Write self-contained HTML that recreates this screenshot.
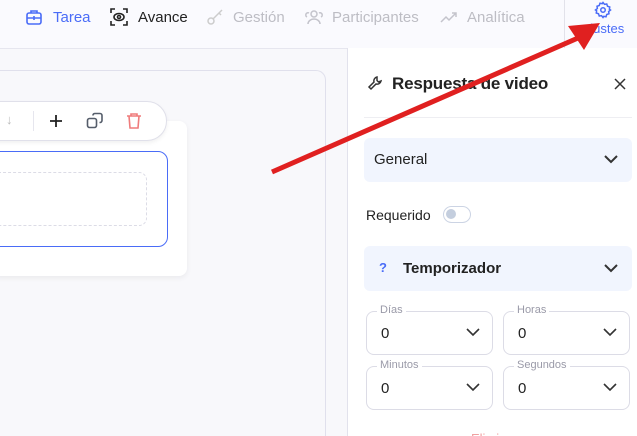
<!DOCTYPE html><html><head><style>
html,body{margin:0;width:637px;height:436px;overflow:hidden}
body{font-family:"Liberation Sans",sans-serif;background:#f8f8fb;position:relative}
.top{position:absolute;left:0;top:0;width:637px;height:48px;background:#fafafe;border-bottom:1px solid #e6e6ef}
.a{position:absolute}
.sel{position:absolute;height:42px;border:1px solid #dcdce6;border-radius:8px;background:#fff}
.sel .l{position:absolute;top:-8px;left:10px;background:#fff;padding:0 3px;font-size:11px;color:#9a9aa8}
.sel .v{position:absolute;left:14px;top:13px;font-size:15px;color:#222}
.sel svg{position:absolute;right:12px;top:16px}
</style></head><body>
<div class="top"></div>
<div class="a" style="left:564px;top:0;width:1px;height:48px;background:#e2e2ea"></div>
<svg class="a" style="left:25px;top:8px" width="18" height="18" viewBox="0 0 18 18" fill="none" stroke="#4a6cf7" stroke-width="1.6"><rect x="2" y="5" width="14" height="11" rx="2"/><path d="M6 5V3h6v2M2 10h14M9 8v4"/></svg>
<div class="a" style="left:53px;top:9px;font-size:15px;color:#4a6cf7">Tarea</div>
<svg class="a" style="left:110px;top:8px" width="18" height="18" viewBox="0 0 18 18" fill="none" stroke="#222" stroke-width="1.6"><path d="M1 5V1h4M13 1h4v4M17 13v4h-4M5 17H1v-4"/><ellipse cx="9" cy="9" rx="5" ry="3.5"/><circle cx="9" cy="9" r="1.5"/></svg>
<div class="a" style="left:138px;top:9px;font-size:15px;color:#222">Avance</div>
<svg class="a" style="left:206px;top:8px" width="18" height="18" viewBox="0 0 18 18" fill="none" stroke="#ccc" stroke-width="1.5"><circle cx="5" cy="13" r="3"/><path d="M7 11l9-9M13 5l2 2"/></svg>
<div class="a" style="left:233px;top:9px;font-size:15px;color:#bdbdc4">Gestión</div>
<svg class="a" style="left:304px;top:8px" width="20" height="18" viewBox="0 0 20 18" fill="none" stroke="#c4c4cc" stroke-width="1.5"><circle cx="10" cy="6" r="3"/><path d="M4 16c0-3 3-5 6-5s6 2 6 5M3 9a2 2 0 1 1 2-4M17 9a2 2 0 1 0-2-4"/></svg>
<div class="a" style="left:332px;top:9px;font-size:15px;color:#bdbdc4">Participantes</div>
<svg class="a" style="left:440px;top:9px" width="18" height="16" viewBox="0 0 18 16" fill="none" stroke="#c4c4cc" stroke-width="1.5"><path d="M1 13l5-5 3 3 7-7M12 4h4v4"/></svg>
<div class="a" style="left:467px;top:9px;font-size:15px;color:#bdbdc4">Analítica</div>
<svg class="a" style="left:594px;top:1px" width="18" height="18" viewBox="0 0 24 24" fill="none" stroke="#4a6cf7" stroke-width="2"><circle cx="12" cy="12" r="3"/><path d="M12 2l2 2.5 3-.5 1 3 3 1-.5 3L22 12l-2.5 2 .5 3-3 1-1 3-3-.5L12 22l-2-2.5-3 .5-1-3-3-1 .5-3L2 12l2.5-2L4 7l3-1 1-3 3 .5z"/></svg>
<div class="a" style="left:583px;top:21px;font-size:13px;color:#4a6cf7">ajustes</div>

<div class="a" style="left:-20px;top:70px;width:346px;height:366px;border:1px solid #e0e0ec;border-bottom:none;border-radius:10px 10px 0 0;background:#f8f8fb;box-sizing:border-box"></div>
<div class="a" style="left:-10px;top:121px;width:197px;height:155px;background:#fff;border-radius:8px;box-shadow:0 2px 6px rgba(0,0,0,.06)"></div>
<div class="a" style="left:-20px;top:101px;width:185px;height:38px;background:#fff;border:1px solid #e0e0ea;border-radius:20px;box-shadow:0 2px 4px rgba(0,0,0,.06)"></div>
<div class="a" style="left:6px;top:112px;color:#bbb;font-size:13px">↓</div>
<div class="a" style="left:33px;top:111px;width:1px;height:20px;background:#e6e6ee"></div>
<svg class="a" style="left:49px;top:114px" width="14" height="14"><path d="M7 1v12M1 7h12" stroke="#222" stroke-width="1.8"/></svg>
<svg class="a" style="left:86px;top:112px" width="18" height="18" fill="none" stroke="#555d6a" stroke-width="1.6"><rect x="1.5" y="6.5" width="9" height="9" rx="2"/><path d="M7 3.5V3a2 2 0 0 1 2-1.5h5a2 2 0 0 1 2 2v5a2 2 0 0 1-2 2h-.5"/></svg>
<svg class="a" style="left:126px;top:112px" width="16" height="18" fill="none" stroke="#ef7c7c" stroke-width="1.6"><path d="M1 4h14M5 4V2h6v2M3 4l1 12h8l1-12"/></svg>
<div class="a" style="left:-20px;top:151px;width:186px;height:94px;border:1px solid #4a6cf7;border-radius:10px;background:#fff"></div>
<div class="a" style="left:-10px;top:172px;width:155px;height:52px;border:1px dashed #dcdce6;border-radius:8px"></div>

<div class="a" style="left:347px;top:48px;width:290px;height:388px;background:#fff;border-left:1px solid #e2e2ec;overflow:hidden">
<div class="a" style="left:123px;top:383px;font-size:13px;color:#f0a0a0">Eliminar</div>
</div>
<svg class="a" style="left:367px;top:75px" width="16" height="16" fill="none" stroke="#333" stroke-width="1.5"><path d="M10 2a4 4 0 0 0-3 5L2 12l2 2 5-5a4 4 0 0 0 5-3l-2.5 1L10 5.5z"/></svg>
<div class="a" style="left:392px;top:74px;font-size:17px;color:#222;font-weight:bold;letter-spacing:-0.2px">Respuesta de video</div>
<svg class="a" style="left:614px;top:78px" width="12" height="12"><path d="M1 1l10 10M11 1L1 11" stroke="#333" stroke-width="1.5"/></svg>
<div class="a" style="left:364px;top:117px;width:268px;height:1px;background:#eeeef2"></div>
<div class="a" style="left:364px;top:138px;width:268px;height:44px;background:#f1f5fe;border-radius:6px"></div>
<div class="a" style="left:374px;top:151px;font-size:15px;color:#222">General</div>
<svg class="a" style="left:604px;top:155px" width="14" height="9"><path d="M1 1l6 6 6-6" stroke="#333" stroke-width="2" fill="none"/></svg>
<div class="a" style="left:366px;top:207px;font-size:14px;color:#222">Requerido</div>
<div class="a" style="left:443px;top:206px;width:26px;height:15px;border:1px solid #ccd4e4;border-radius:9px;background:#fff"></div>
<div class="a" style="left:446px;top:209px;width:10px;height:10px;border-radius:50%;background:#c4cede"></div>
<div class="a" style="left:364px;top:246px;width:268px;height:45px;background:#f1f5fe;border-radius:6px"></div>
<div class="a" style="left:379px;top:260px;font-size:13px;color:#4a6cf7;font-weight:bold">?</div>
<div class="a" style="left:403px;top:260px;font-size:15px;color:#222;font-weight:bold">Temporizador</div>
<svg class="a" style="left:604px;top:264px" width="14" height="9"><path d="M1 1l6 6 6-6" stroke="#333" stroke-width="2" fill="none"/></svg>
<div class="sel" style="left:366px;top:311px;width:125px"><span class="l">Días</span><span class="v">0</span><svg width="14" height="9"><path d="M1 1l6 6 6-6" stroke="#333" stroke-width="1.6" fill="none"/></svg></div>
<div class="sel" style="left:503px;top:311px;width:125px"><span class="l">Horas</span><span class="v">0</span><svg width="14" height="9"><path d="M1 1l6 6 6-6" stroke="#333" stroke-width="1.6" fill="none"/></svg></div>
<div class="sel" style="left:366px;top:366px;width:125px"><span class="l">Minutos</span><span class="v">0</span><svg width="14" height="9"><path d="M1 1l6 6 6-6" stroke="#333" stroke-width="1.6" fill="none"/></svg></div>
<div class="sel" style="left:503px;top:366px;width:125px"><span class="l">Segundos</span><span class="v">0</span><svg width="14" height="9"><path d="M1 1l6 6 6-6" stroke="#333" stroke-width="1.6" fill="none"/></svg></div>

<svg class="a" style="left:0;top:0" width="637" height="436"><line x1="272" y1="172" x2="578" y2="38" stroke="#e02020" stroke-width="5"/><polygon points="600,23 568,26 584,50" fill="#e02020"/></svg>
</body></html>
